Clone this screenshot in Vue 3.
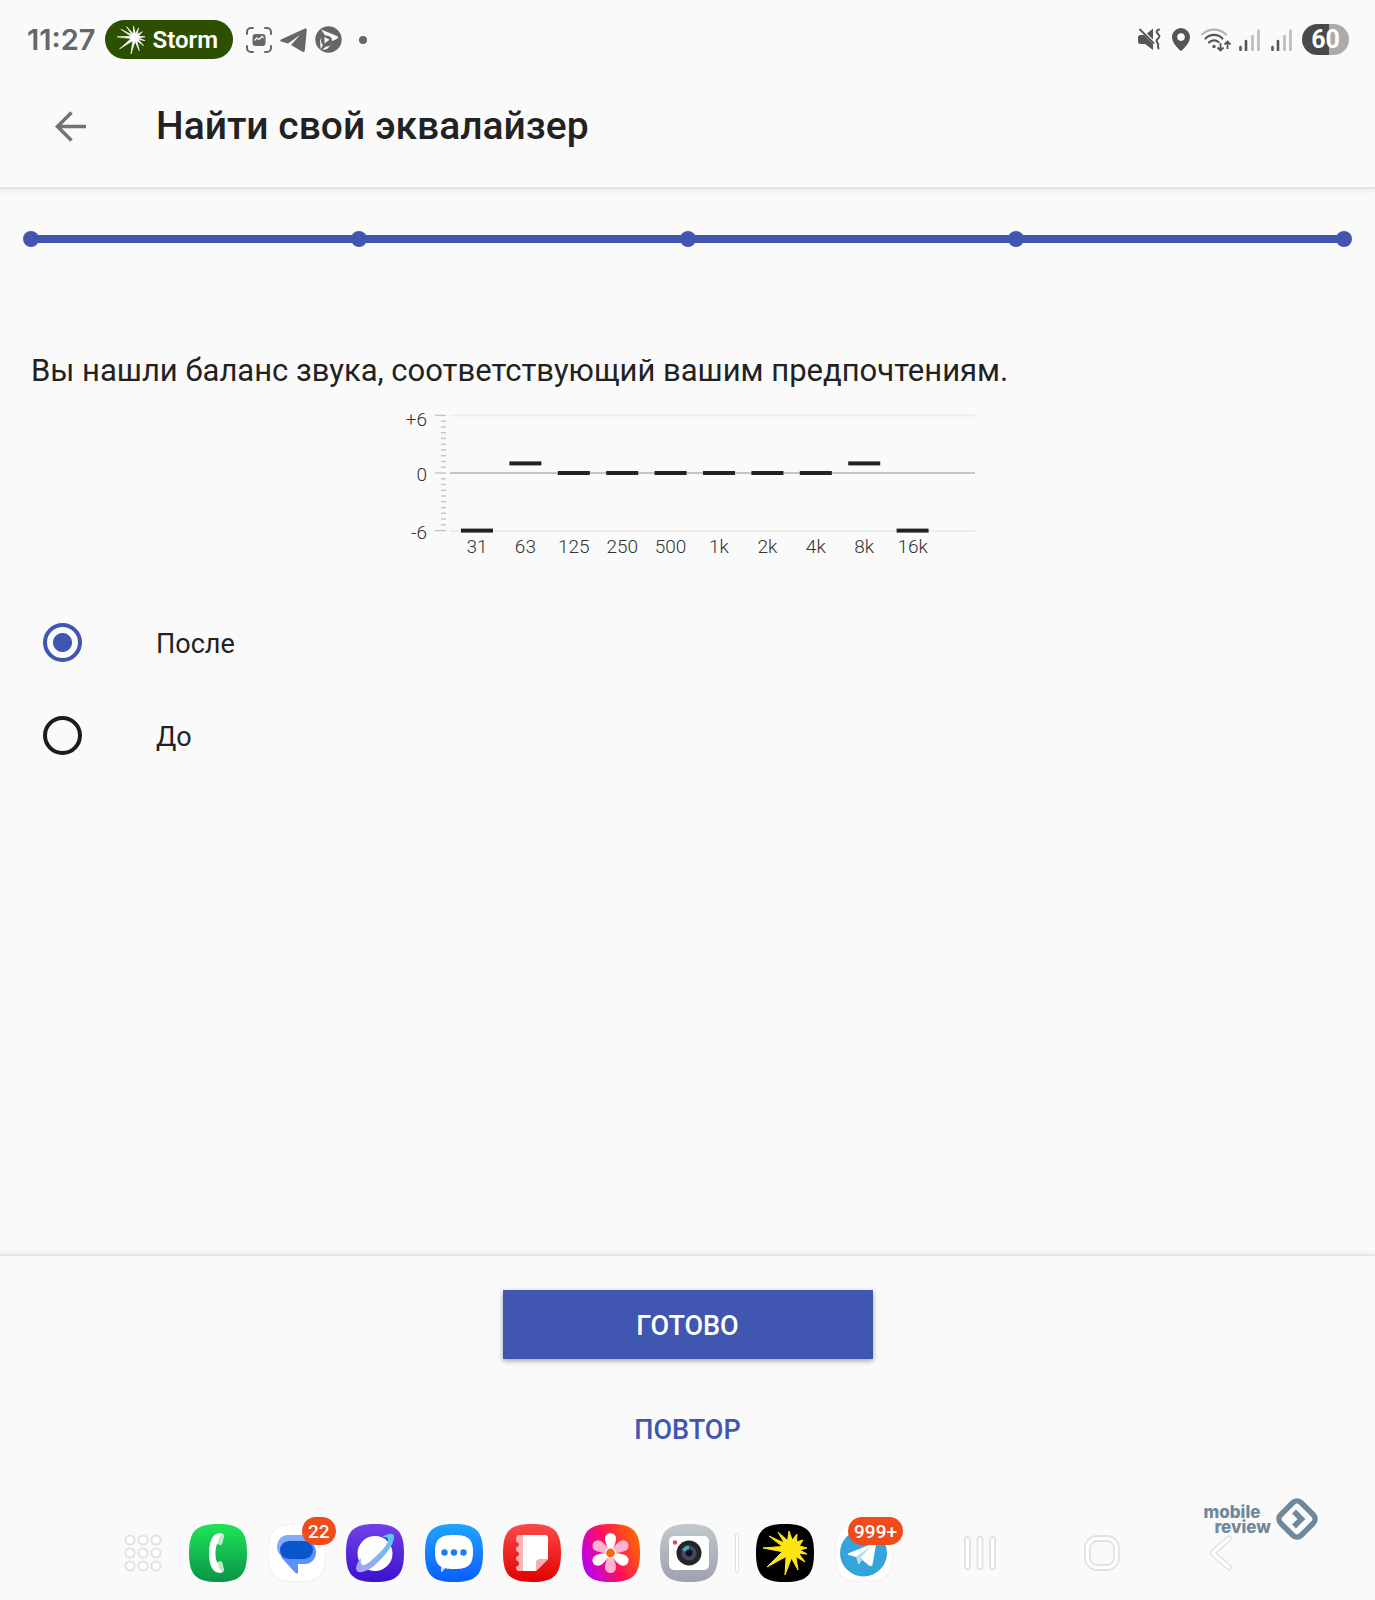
<script setup>
import { ref } from 'vue'

const choice = ref('after')
const options = [
  { value: 'after', label: 'После' },
  { value: 'before', label: 'До' },
]

const steps = [1, 2, 3, 4, 5]

const bands = [
  { label: '31', gain: -6 },
  { label: '63', gain: 1 },
  { label: '125', gain: 0 },
  { label: '250', gain: 0 },
  { label: '500', gain: 0 },
  { label: '1k', gain: 0 },
  { label: '2k', gain: 0 },
  { label: '4k', gain: 0 },
  { label: '8k', gain: 1 },
  { label: '16k', gain: -6 },
]
const zeroY = 78
const perDb = 9.6
const bandX = (i) => 82 + i * 48.4
const gainY = (gain) => zeroY - gain * perDb
const ticks = Array.from({ length: 21 }, (_, i) => ({
  y: Math.round((zeroY - 57.6 + i * 5.76) * 10) / 10,
  major: i % 10 === 0,
}))

// Spiky star: long tips joined through an inner ring around the centre
const tips = [
  [7, 24], [13, 12], [22, 8], [33, 7], [41, 10], [47, 16],
  [51, 24], [51, 30], [49, 38], [42, 46], [29, 51], [11, 43],
]
function star(inner) {
  const cx = 35
  const cy = 25
  const angles = tips.map(([x, y]) => Math.atan2(y - cy, x - cx))
  return tips
    .map(([x, y], i) => {
      let next = angles[(i + 1) % tips.length]
      while (next < angles[i]) next += Math.PI * 2
      const mid = (angles[i] + next) / 2
      const ix = (cx + inner * Math.cos(mid)).toFixed(1)
      const iy = (cy + inner * Math.sin(mid)).toFixed(1)
      return `${x},${y} ${ix},${iy}`
    })
    .join(' ')
}
const squircle = 'M29 0C7 0 0 7 0 29s7 29 29 29 29-7 29-29S51 0 29 0Z'
const petal = 'M28.500 29C25 24 23 18 23 14.500a5.500 5.500 0 0 1 11 0C34 18 32 24 28.500 29Z'
</script>

<template>
  <div class="screen">
    <div class="status">
      <div class="status-side">
        <span class="clock">11:27</span>
        <span class="pill">
          <svg width="28" height="28" viewBox="7 7 44 44" aria-hidden="true">
            <polygon :points="star(6)" fill="#fff" stroke="#fff" stroke-width="1" />
          </svg>
          Storm
        </span>
        <span class="notices">
          <svg width="26" height="26" viewBox="0 0 26 26" aria-hidden="true">
            <path d="M1 7V5a4 4 0 0 1 4-4h2M19 1h2a4 4 0 0 1 4 4v2M25 19v2a4 4 0 0 1-4 4h-2M7 25H5a4 4 0 0 1-4-4v-2" fill="none" stroke="#666" stroke-width="2" stroke-linecap="round" />
            <rect x="6.500" y="7" width="13" height="12" rx="3" fill="#666" />
            <path d="M8.500 13.500l2.500-2.500 2 1.500 3-3 1.500 1.500" fill="none" stroke="#fafafa" stroke-width="1.300" />
          </svg>
          <svg width="27" height="24" viewBox="0 0 27 24" aria-hidden="true">
            <path d="M25 .5 1 11.500c-1 .5-1 1.500 0 2l7 2L20 7 11 17l11 6.500c1.500.8 2.500.3 2.800-.7L26.800 2Q27 0 25 .5Z" fill="#666" />
          </svg>
          <svg width="27" height="27" viewBox="0 0 27 27" aria-hidden="true">
            <circle cx="13.500" cy="13.500" r="13.200" fill="#666" />
            <path d="M6 3.500 22 10c1.500.7 1.500 2 0 2.800l-5 2.400a5 5 0 0 0-6.500-5.400Z" fill="#fafafa" />
            <path d="M7 11.500a6 6 0 0 0 1 7.500l-2.500 4L5 14ZM11 20.500a6 6 0 0 0 5.500-2l-4.500 4.500-5 1Z" fill="#fafafa" />
            <path d="M9.500 11l5 2.800-5 3.700Z" fill="#fafafa" />
          </svg>
        </span>
        <i class="more"></i>
      </div>
      <div class="status-side">
        <svg width="23" height="23" viewBox="0 0 23 23" aria-hidden="true">
          <path d="M0 9.500C0 8 1 7 2.500 7H6l9 9v6L7 16H2.500C1 16 0 15 0 13.500ZM9 5.500l6-5V11.500Z" fill="#555" />
          <path d="M2 1.500 15.500 15" stroke="#555" stroke-width="1.800" stroke-linecap="round" />
          <path d="M21 1.500c-3 1.500-3 2.500-1 4.500s2 3-.500 5 0 3 .5 4.800-.500 2.500.5 4.700" fill="none" stroke="#555" stroke-width="2" stroke-linecap="round" />
        </svg>
        <svg class="pin" width="18" height="23" viewBox="0 0 18 23" aria-hidden="true">
          <path d="M9 0a9 9 0 0 0-9 9c0 5 4 9 7.500 13q1.500 1.500 3 0C14 18 18 14 18 9a9 9 0 0 0-9-9Zm0 5.300a3.800 3.800 0 1 1 0 7.600 3.800 3.800 0 0 1 0-7.600Z" fill="#555" />
        </svg>
        <svg class="wifi" width="31" height="24" viewBox="0 0 31 24" aria-hidden="true">
          <g fill="none" stroke-width="2.200" stroke-linecap="round">
            <path d="M1 6.500a17 17 0 0 1 24 0" stroke="#b5b5b5" />
            <path d="M4.500 10.500a12 12 0 0 1 17 0M8 14.500a7 7 0 0 1 9.500-.5" stroke="#555" />
          </g>
          <circle cx="13" cy="18.500" r="1.700" fill="#555" />
          <path d="M19.500 15v7m-3-2.500 3 3 3-3M26.500 21v-7m-3 2.500 3-3 3 3" fill="none" stroke="#555" stroke-width="1.800" />
        </svg>
        <svg v-for="n in 2" :key="n" class="signal" width="21" height="22" viewBox="0 0 21 22" aria-hidden="true">
          <path d="M1.500 18v3M7 12v9" stroke="#555" stroke-width="2.600" stroke-linecap="round" />
          <path d="M13.500 7v14M19.500 1.500V21" stroke="#bbb" stroke-width="2.600" stroke-linecap="round" />
        </svg>
        <span class="battery">60</span>
      </div>
    </div>

    <header class="header">
      <button class="back" type="button" aria-label="Назад">
        <svg width="31" height="31" viewBox="0 0 31 31" aria-hidden="true">
          <path d="M31 15.500H3M16.500 1.500l-14 14 14 14" fill="none" stroke="#737373" stroke-width="3.500" />
        </svg>
      </button>
      <h1>Найти свой эквалайзер</h1>
    </header>

    <main class="content">
      <div class="stepper">
        <i v-for="s in steps" :key="s"></i>
      </div>
      <p class="message">Вы нашли баланс звука, соответствующий вашим предпочтениям.</p>

      <svg class="chart" width="585" height="170" viewBox="0 0 585 170" role="img" aria-label="+6 / -6">
        <path d="M55 20.500H580M55 136H580" stroke="#ededed" stroke-width="2" />
        <path d="M55 78H580" stroke="#c6c6c6" stroke-width="2" />
        <path v-for="t in ticks" :key="t.y" :d="`M${t.major ? 40 : 46} ${t.y}H51`" stroke="#c4c4c4" stroke-width="1.400" />
        <g text-anchor="end">
          <text x="32" y="31">+6</text>
          <text x="32" y="86">0</text>
          <text x="32" y="144">-6</text>
        </g>
        <g text-anchor="middle">
          <template v-for="(b, i) in bands" :key="b.label">
            <rect :x="bandX(i) - 16" :y="gainY(b.gain) - 2" width="32" height="4" fill="#222" />
            <text :x="bandX(i)" y="158">{{ b.label }}</text>
          </template>
        </g>
      </svg>

      <div class="options">
        <label v-for="o in options" :key="o.value" class="option">
          <input v-model="choice" type="radio" name="balance" :value="o.value" />
          <span>{{ o.label }}</span>
        </label>
      </div>
    </main>

    <section class="actions">
      <button class="primary" type="button">ГОТОВО</button>
      <button class="text-button" type="button">ПОВТОР</button>
    </section>

    <nav class="dock">
      <svg width="38" height="38" viewBox="0 0 38 38" aria-hidden="true">
        <g fill="#fff" stroke="#e2e2e2" stroke-width="2">
          <template v-for="r in 3" :key="r">
            <circle v-for="c in 3" :key="c" :cx="c * 13 - 7" :cy="r * 13 - 7" r="4.600" />
          </template>
        </g>
      </svg>

      <div class="apps">
        <span class="app">
          <svg viewBox="0 0 58 58" aria-hidden="true">
            <defs><linearGradient id="g-phone" x2="0" y2="1"><stop stop-color="#1fe556" /><stop offset="1" stop-color="#089448" /></linearGradient></defs>
            <path :d="squircle" fill="url(#g-phone)" />
            <path d="M31 9C23 9 20 19 20 29.500S23 49 31 49q3 0 4-3l-3-9-3 2c-2-2-2.500-5-2.500-9.500S27 21 29 19l3 2 3-9q-1-3-4-3Z" fill="#fff" />
            <path d="M34 10q1.500 2-.5 9c-.5 2-3 2.500-4.500 1 0-3 1-8 5-10ZM34 48q1.500-2-.5-9c-.5-2-3-2.500-4.500-1 0 3 1 8 5 10Z" fill="#b5ecc5" />
          </svg>
        </span>
        <span class="app">
          <svg viewBox="0 0 58 58" aria-hidden="true">
            <path :d="squircle" fill="#fff" stroke="#ededed" />
            <path d="M20 11h19q6 2 6 8v7q-1 9-10 9H20C13 33 9 29 9 23s4-12 11-12Z" fill="#83a9f8" />
            <path d="M22 17h17c6 1 9 6 9 11.500S44 40 37 40h-7v8c0 2-1.500 2-2.500 1l-11-12Q12 33 12 27q1-10 10-10Z" fill="#5e8ffa" />
            <rect x="12" y="17" width="33" height="18" rx="9" fill="#0a55cf" />
          </svg>
          <b class="badge">22</b>
        </span>
        <span class="app">
          <svg viewBox="0 0 58 58" aria-hidden="true">
            <defs>
              <linearGradient id="g-net" x2="0" y2="1"><stop stop-color="#7340e8" /><stop offset="1" stop-color="#3a13cf" /></linearGradient>
              <linearGradient id="g-ring" x2="0" y1="0" y2="1"><stop stop-color="#4fcdf0" /><stop offset="1" stop-color="#a9a2f5" /></linearGradient>
            </defs>
            <path :d="squircle" fill="url(#g-net)" />
            <circle cx="29" cy="29.500" r="17.500" fill="#fff" />
            <path d="M36 13c6-4 13-5 12 1-1 8-10 19-19 27-7 6-15 9-18 6-2-2-1-7 4-13 0 3-1 6 1 7 2 1 7-2 12-7 9-8 15-15 14-19 0-2-3-2-6-2Z" fill="url(#g-ring)" />
          </svg>
        </span>
        <span class="app">
          <svg viewBox="0 0 58 58" aria-hidden="true">
            <defs><linearGradient id="g-msg" x2="0" y2="1"><stop stop-color="#20a4fc" /><stop offset="1" stop-color="#0b5dff" /></linearGradient></defs>
            <path :d="squircle" fill="url(#g-msg)" />
            <path d="M16 41h7l-6 7q-1 .5-1-1Z" fill="#c2ddff" />
            <path d="M29 11c13 0 19 3 19 17s-6 17-19 17-19-3-19-17 6-17 19-17Z" fill="#fff" />
            <g fill="#1c7fee"><circle cx="19.500" cy="28.500" r="3.200" /><circle cx="29" cy="28.500" r="3.200" /><circle cx="38.500" cy="28.500" r="3.200" /></g>
          </svg>
        </span>
        <span class="app">
          <svg viewBox="0 0 58 58" aria-hidden="true">
            <defs><linearGradient id="g-note" x2="0" y2="1"><stop stop-color="#fb4a4a" /><stop offset="1" stop-color="#e20000" /></linearGradient></defs>
            <path :d="squircle" fill="url(#g-note)" />
            <path d="M15 11h6v36h-6q-2-1-2-3c0-3 3-1 3-4.500s-3-2-3-5 3-2 3-4.500-3-2-3-5 3-2 3-4.500-3-1.500-3-4.500q0-4 2-5Z" fill="#fbb5b5" />
            <path d="M20 11h22q3 0 3 3v21L33 47H20Z" fill="#fff" />
            <path d="M33 47V39q0-4 4-4h8Z" fill="#fcaaaa" />
          </svg>
        </span>
        <span class="app">
          <svg viewBox="0 0 58 58" aria-hidden="true">
            <defs><linearGradient id="g-gal" x1="0" y1=".75" x2="1" y2=".3"><stop stop-color="#b300ff" /><stop offset=".5" stop-color="#ff0f5d" /><stop offset="1" stop-color="#ff6800" /></linearGradient></defs>
            <path :d="squircle" fill="url(#g-gal)" />
            <path v-for="a in [60, 180, 300]" :key="a" :d="petal" fill="#ffb3d0" :transform="`rotate(${a} 28.500 29)`" />
            <path v-for="a in [0, 120, 240]" :key="a" :d="petal" fill="#fff" :transform="`rotate(${a} 28.500 29)`" />
            <circle cx="28.500" cy="29" r="5.500" fill="#fff" />
            <circle cx="28.500" cy="29" r="4.400" fill="#f46a0c" />
          </svg>
        </span>
        <span class="app">
          <svg viewBox="0 0 58 58" aria-hidden="true">
            <defs><linearGradient id="g-cam" x2="0" y2="1"><stop stop-color="#c0c9cb" /><stop offset="1" stop-color="#9fa1b0" /></linearGradient></defs>
            <path :d="squircle" fill="url(#g-cam)" />
            <rect x="9" y="12" width="40" height="34" rx="5" fill="#fff" />
            <circle cx="15" cy="18.500" r="2.200" fill="#e5405c" />
            <circle cx="29" cy="29" r="12.500" fill="#252525" />
            <circle cx="29" cy="29" r="7.500" fill="#404a66" />
            <path d="M29 29 22 26a7.500 7.500 0 0 1 7-4.500Z" fill="#48a9bd" />
            <circle cx="29" cy="29" r="3.400" fill="#11111c" />
          </svg>
        </span>
      </div>

      <i class="divider"></i>

      <div class="recent">
        <span class="app">
          <svg viewBox="0 0 58 58" aria-hidden="true">
            <path :d="squircle" fill="#000" />
            <polygon :points="star(9)" fill="#ffe414" stroke="#ffe414" stroke-width="1" stroke-linejoin="round" />
          </svg>
        </span>
        <span class="app">
          <svg viewBox="0 0 58 58" aria-hidden="true">
            <path :d="squircle" fill="#fff" stroke="#ededed" />
            <circle cx="28.500" cy="29" r="23.500" fill="#33a4dc" />
            <path d="M39 19 14 29c-2 1-1 2 0 2l7 2L34 24 25 34l9 7.500c2 1 3 .5 3.500-1L41 21q0-2.500-2-2Z" fill="#fff" />
            <path d="M21 33l2.500 7.500L27 36.500 25 34l9-10Z" fill="#c5dceb" />
          </svg>
          <b class="badge">999+</b>
        </span>
      </div>

      <div class="system">
        <button type="button" aria-label="Недавние">
          <svg width="32" height="36" viewBox="0 0 32 36" aria-hidden="true">
            <g fill="#fff" stroke="#e2e2e2" stroke-width="1.800"><rect x="1" y="2" width="5" height="32" rx="2" /><rect x="13.500" y="2" width="5" height="32" rx="2" /><rect x="26" y="2" width="5" height="32" rx="2" /></g>
          </svg>
        </button>
        <button type="button" aria-label="Домой">
          <svg width="36" height="36" viewBox="0 0 36 36" aria-hidden="true">
            <g stroke="#e2e2e2" stroke-width="1.800"><rect x="1" y="1" width="34" height="34" rx="12" fill="#fff" /><rect x="6" y="6" width="24" height="24" rx="7" fill="#fafafa" /></g>
          </svg>
        </button>
        <button type="button" aria-label="Назад">
          <svg width="28" height="36" viewBox="0 0 28 36" aria-hidden="true">
            <g fill="none" stroke-linecap="round" stroke-linejoin="round"><path d="M22 3.500 5.500 18 22 32.500" stroke="#e2e2e2" stroke-width="6" /><path d="M22 3.500 5.500 18 22 32.500" stroke="#fff" stroke-width="3" /></g>
          </svg>
        </button>
      </div>

      <div class="brand">
        <div class="brand-name">
          <span>mobile</span>
          <span class="second">review</span>
        </div>
        <svg width="44" height="44" viewBox="0 0 44 44" aria-hidden="true">
          <rect x="7.500" y="7.500" width="29" height="29" rx="6" fill="none" stroke="#70889c" stroke-width="5.500" transform="rotate(45 22 22)" />
          <path d="M19 14.500 26.500 22 19 29.500" fill="none" stroke="#70889c" stroke-width="5.500" />
        </svg>
      </div>
    </nav>
  </div>
</template>

<style>
body {
  margin: 0;
  background: #fafafa;
}
</style>

<style scoped>
.screen {
  display: flex;
  flex-direction: column;
  min-height: 100vh;
  background: #fafafa;
  color: #222;
  font-family: Roboto, sans-serif;
}
svg {
  display: block;
  flex: none;
}
button {
  border: 0;
  padding: 0;
  background: none;
  font: inherit;
  cursor: pointer;
}

.status {
  display: flex;
  justify-content: space-between;
  align-items: center;
  height: 79px;
  padding: 0 26px 0 27px;
}
.status-side {
  display: flex;
  align-items: center;
}
.clock {
  color: #666;
  font-family: Inter, sans-serif;
  font-size: 29px;
  font-weight: 600;
}
.pill {
  display: flex;
  align-items: center;
  gap: 8px;
  height: 39px;
  margin-left: 9px;
  padding: 0 15px 0 12px;
  border-radius: 20px;
  background: #2c5000;
  color: #fff;
  font-size: 24px;
  font-weight: 600;
}
.notices {
  display: flex;
  align-items: center;
  gap: 8px;
  margin-left: 13px;
}
.more {
  width: 8px;
  height: 8px;
  margin-left: 17px;
  border-radius: 50%;
  background: #666;
}
.pin,
.wifi {
  margin-left: 11px;
}
.signal {
  margin-left: 7px;
}
.signal + .signal {
  margin-left: 11px;
}
.battery {
  width: 47px;
  height: 31px;
  margin-left: 10px;
  border-radius: 16px;
  background: linear-gradient(90deg, #4a4a4a 58%, #ababab 58%);
  color: #fff;
  font-size: 25px;
  font-weight: 700;
  line-height: 32px;
  text-align: center;
}

.header {
  display: flex;
  align-items: center;
  gap: 70px;
  padding: 20px 55px 34px;
  border-bottom: 2px solid #e4e4e4;
  box-shadow: 0 2px 5px rgba(0, 0, 0, 0.06);
}
h1 {
  margin: 0;
  font-size: 39px;
  font-weight: 500;
  line-height: 54px;
}

.content {
  flex: 1;
  padding: 42px 23px 0;
}
.stepper {
  display: flex;
  justify-content: space-between;
  background: linear-gradient(#4056b0, #4056b0) center / calc(100% - 16px) 8px no-repeat;
}
.stepper i {
  width: 16px;
  height: 16px;
  border-radius: 50%;
  background: #4056b0;
}
.message {
  margin: 104px 8px 0;
  font-size: 31px;
  line-height: 40px;
}
.chart {
  max-width: 100%;
  margin: 4px auto 0;
}
.chart text {
  fill: #333;
  font-size: 19px;
  font-weight: 300;
}
.options {
  display: flex;
  flex-direction: column;
  gap: 54px;
  margin: 58px 20px 0;
}
.option {
  display: flex;
  align-items: center;
  gap: 74px;
  font-size: 27px;
  line-height: 39px;
}
.option span {
  padding-top: 3px;
  line-height: 36px;
}
.option input {
  width: 39px;
  height: 39px;
  margin: 0;
  border: 4px solid #1c1c1c;
  border-radius: 50%;
  appearance: none;
}
.option input:checked {
  border-color: #4056b0;
  background: radial-gradient(circle, #4056b0 9px, transparent 10px);
}

.actions {
  display: flex;
  flex-direction: column;
  align-items: center;
  gap: 35px;
  padding: 34px 0;
  border-top: 2px solid #e6e6e6;
  box-shadow: 0 -2px 4px rgba(0, 0, 0, 0.04);
  font-size: 27px;
  font-weight: 500;
}
.actions button {
  width: 370px;
  height: 69px;
  padding-top: 2px;
}
.actions .primary {
  background: #4056b0;
  box-shadow: 0 2px 5px rgba(0, 0, 0, 0.35);
  color: #fff;
}
.actions .text-button {
  color: #4056b0;
}

.dock {
  position: relative;
  display: flex;
  align-items: center;
  justify-content: center;
  padding: 27px 16px 18px 0;
}
.apps {
  display: flex;
  justify-content: space-between;
  width: 529px;
  margin-left: 27px;
}
.app {
  position: relative;
  width: 58px;
  height: 58px;
}
.badge {
  position: absolute;
  top: -7px;
  right: -10px;
  height: 28px;
  padding: 0 6px;
  border-radius: 14px;
  background: #f04b18;
  color: #fff;
  font-size: 19px;
  font-weight: 500;
  line-height: 29px;
}
.divider {
  width: 2px;
  height: 38px;
  margin: 0 17px;
  border: 1px solid #e0e0e0;
  border-radius: 2px;
  background: #fff;
}
.recent {
  display: flex;
  gap: 21px;
}
.system {
  display: flex;
  justify-content: space-between;
  width: 271px;
  margin-left: 71px;
}
.brand {
  position: absolute;
  top: 0;
  right: 56px;
  display: flex;
  align-items: center;
  gap: 4px;
  color: #70889c;
}
.brand-name {
  display: flex;
  flex-direction: column;
  padding-top: 2px;
  font: 800 17px/15px Inter, sans-serif;
}
.second {
  padding-left: 11px;
}
</style>
